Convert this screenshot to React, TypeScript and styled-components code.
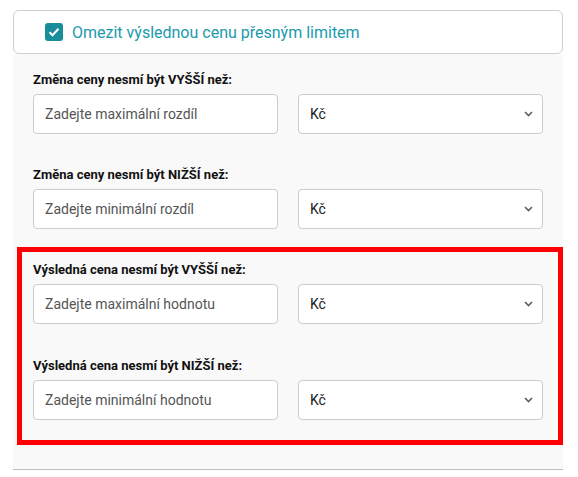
import React from "react";
import styled, { createGlobalStyle } from "styled-components";

const GlobalStyle = createGlobalStyle`
  body {
    margin: 10px 0 0 13px;
    background: #fff;
    font-family: Roboto, "Liberation Sans", sans-serif;
  }
`;

const Wrapper = styled.div`
  width: 550px;
`;

const HeaderCard = styled.label`
  display: flex;
  align-items: center;
  box-sizing: border-box;
  height: 44px;
  padding-left: 31px;
  background: #fff;
  border: 1px solid #cfcfcf;
  border-radius: 6px;
  cursor: pointer;
`;

const CheckBox = styled.span`
  display: flex;
  align-items: center;
  justify-content: center;
  width: 18px;
  height: 18px;
  border-radius: 3px;
  background: #178c9a;
  margin-right: 9px;
`;

const HeaderText = styled.span`
  font-size: 16px;
  color: #1a9aad;
`;

const Panel = styled.div`
  background: #f9f9f9;
  padding: 18px 20px 24px;
  border-bottom: 1px solid #bdbdbd;
  display: flex;
  flex-direction: column;
  gap: 33px;
`;

const Highlight = styled.div`
  margin: -15px -20px 0 -16px;
  border: 5px solid #ff0000;
  padding: 10px 15px 20px 11px;
  display: flex;
  flex-direction: column;
  gap: 34px;
`;

const Group = styled.div`
  display: flex;
  flex-direction: column;
`;

const Label = styled.div`
  font-size: 13px;
  font-weight: 700;
  color: #111;
  line-height: 15px;
  margin-bottom: 7px;
`;

const Row = styled.div`
  display: grid;
  grid-template-columns: 245px 245px;
  gap: 20px;
`;

const Field = styled.input`
  box-sizing: border-box;
  height: 40px;
  padding: 0 11px;
  border: 1px solid #cccccc;
  border-radius: 4px;
  background: #fff;
  font-family: Roboto, "Liberation Sans", sans-serif;
  font-size: 14px;
  color: #333;
  outline: none;
  &::placeholder {
    color: #555;
  }
`;

const SelectBox = styled.div`
  position: relative;
  display: flex;
`;

const Select = styled.select`
  appearance: none;
  box-sizing: border-box;
  width: 100%;
  height: 40px;
  padding: 0 11px;
  border: 1px solid #cccccc;
  border-radius: 4px;
  background: #fff;
  font-family: Roboto, "Liberation Sans", sans-serif;
  font-size: 14px;
  color: #222;
  outline: none;
`;

const Chevron = styled.svg`
  position: absolute;
  right: 10px;
  top: 17px;
  pointer-events: none;
`;

const LimitRow: React.FC<{ label: string; placeholder: string }> = ({ label, placeholder }) => (
  <Group>
    <Label>{label}</Label>
    <Row>
      <Field placeholder={placeholder} />
      <SelectBox>
        <Select defaultValue="czk">
          <option value="czk">Kč</option>
          <option value="pct">%</option>
        </Select>
        <Chevron width="9" height="6" viewBox="0 0 9 6">
          <path d="M1 1l3.5 3.5L8 1" fill="none" stroke="#56606e" strokeWidth="1.6" />
        </Chevron>
      </SelectBox>
    </Row>
  </Group>
);

const App: React.FC = () => {
  return (
    <Wrapper>
      <GlobalStyle />
      <HeaderCard>
        <CheckBox>
          <svg width="12" height="10" viewBox="0 0 12 10">
            <path d="M1.5 5.2l3 3L10.5 1.8" fill="none" stroke="#fff" strokeWidth="2" />
          </svg>
        </CheckBox>
        <HeaderText>Omezit výslednou cenu přesným limitem</HeaderText>
      </HeaderCard>
      <Panel>
        <LimitRow label="Změna ceny nesmí být VYŠŠÍ než:" placeholder="Zadejte maximální rozdíl" />
        <LimitRow label="Změna ceny nesmí být NIŽŠÍ než:" placeholder="Zadejte minimální rozdíl" />
        <Highlight>
          <LimitRow label="Výsledná cena nesmí být VYŠŠÍ než:" placeholder="Zadejte maximální hodnotu" />
          <LimitRow label="Výsledná cena nesmí být NIŽŠÍ než:" placeholder="Zadejte minimální hodnotu" />
        </Highlight>
      </Panel>
    </Wrapper>
  );
};

export default App;
